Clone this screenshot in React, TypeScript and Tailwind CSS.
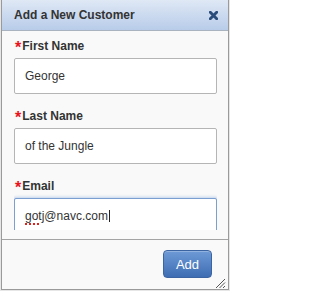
import React from "react";

function Field({ label, value, focused, children }: { label: string; value?: string; focused?: boolean; children?: React.ReactNode }) {
  return (
    <div className="flex flex-col gap-[4px] pb-[15px]">
      <div className="flex items-start h-[15px] leading-[15px] text-[12px] font-bold text-[#333]">
        <span className="text-[#e8141c] text-[16px] leading-[15px] pt-[1px] mr-[1px] ml-[1px]">*</span>
        <span>{label}</span>
      </div>
      <div
        className={
          "h-[36px] w-[203px] rounded-[2px] bg-white flex items-center pl-[10px] text-[12px] text-[#333] " +
          (focused
            ? "border border-[#7a9fd0] shadow-[0_0_3px_1px_rgba(120,160,215,0.45)]"
            : "border border-[#b5b5b5]")
        }
      >
        {children ?? value}
      </div>
    </div>
  );
}

export default function App() {
  return (
    <div
      className="w-[230px] h-[291px] bg-[#e6e6e6] overflow-hidden"
      style={{ fontFamily: '"Liberation Sans", Arial, sans-serif' }}
    >
      <div className="relative ml-[1px] w-[228px] h-[290px] border-x border-b border-[#9a9a9a] bg-[#f9f9f9] flex flex-col">
        <div className="h-[31px] shrink-0 flex items-center justify-between pl-[12px] pr-[10px] bg-gradient-to-b from-[#dfe8f5] to-[#b8cce9] border-b border-[#a9b3bf]">
          <span className="text-[12px] font-bold text-[#333] leading-[15px]">Add a New Customer</span>
          <svg width="9" height="9" viewBox="0 0 9 9" className="mt-[1px]">
            <path d="M1.3 1.3 L7.7 7.7 M7.7 1.3 L1.3 7.7" stroke="#2b4d7c" strokeWidth="2.9" strokeLinecap="square" />
          </svg>
        </div>
        <div className="h-[208px] shrink-0 pt-[8px] pb-[9px] pl-[12px] pr-[11px]">
          <div className="h-[191px] overflow-hidden">
            <Field label="First Name" value="George" />
            <Field label="Last Name" value="of the Jungle" />
            <Field label="Email" focused>
              <span className="underline decoration-dotted decoration-[#e0201a] decoration-2 underline-offset-[3px]">got</span>
              <span>j@navc.com</span>
              <span className="inline-block w-px h-[12px] bg-[#222] ml-[1px]" />
            </Field>
          </div>
        </div>
        <div className="flex-1 border-t border-[#a3a3a3] flex justify-end items-start pt-[10px] pr-[16px]">
          <button className="w-[49px] h-[28px] rounded-[4px] border border-[#3b64a3] bg-gradient-to-b from-[#6e9ad6] to-[#3e6db3] text-white text-[13px] leading-none shadow-[inset_0_1px_0_rgba(255,255,255,0.25)]">
            Add
          </button>
        </div>
        <svg width="11" height="10" viewBox="0 0 11 10" className="absolute right-[2px] bottom-[1px]">
          <path d="M1 10 L10 1 M4.5 10 L10 4.5 M8 10 L10 8" stroke="#555" strokeWidth="1" />
        </svg>
      </div>
    </div>
  );
}
